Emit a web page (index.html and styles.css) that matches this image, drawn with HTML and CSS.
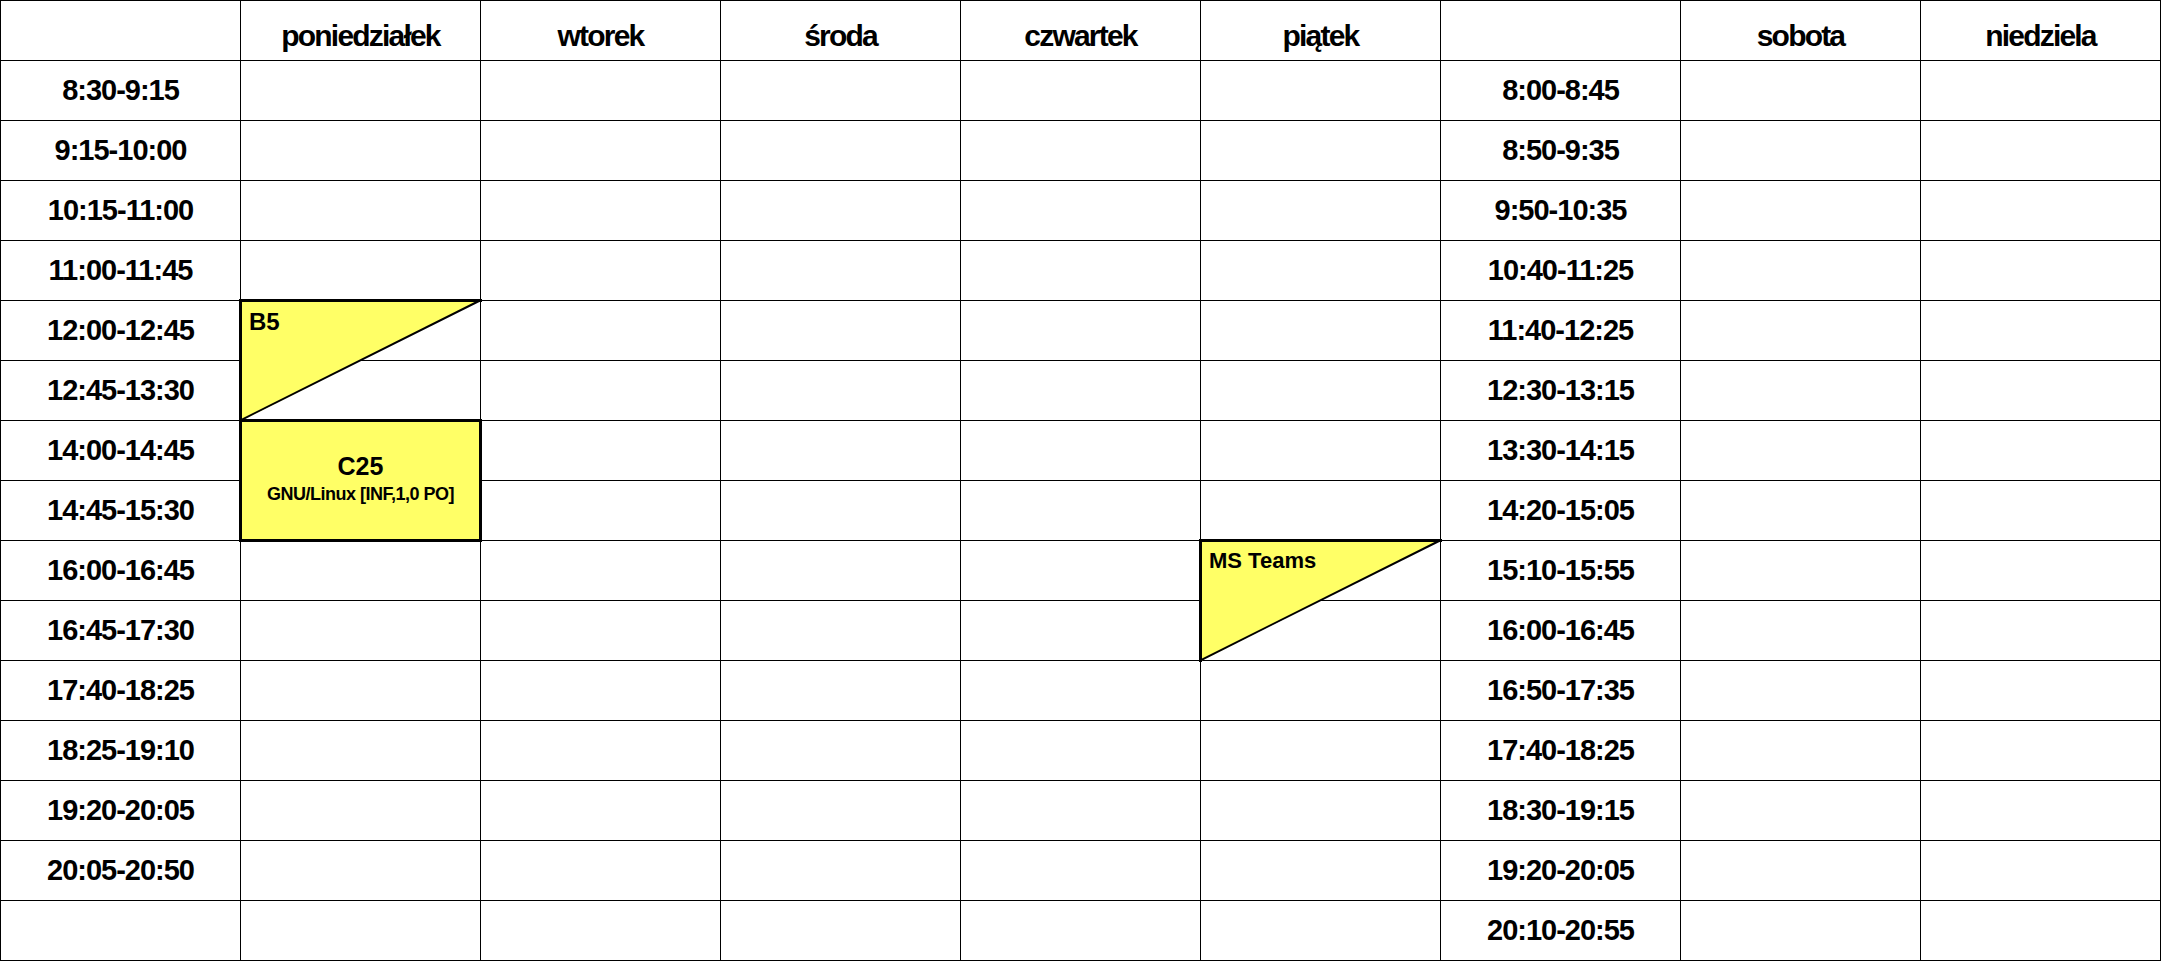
FILE: index.html
```html
<!DOCTYPE html>
<html lang="pl">
<head>
  <meta charset="UTF-8">
  <title>Plan zajęć</title>
  <link rel="stylesheet" href="styles.css">
</head>
<body>
  <div class="plan">
    <div class="cell day"></div>
    <div class="cell day">poniedziałek</div>
    <div class="cell day">wtorek</div>
    <div class="cell day">środa</div>
    <div class="cell day">czwartek</div>
    <div class="cell day">piątek</div>
    <div class="cell day"></div>
    <div class="cell day">sobota</div>
    <div class="cell day">niedziela</div>

    <div class="cell time">8:30-9:15</div><div class="cell"></div><div class="cell"></div><div class="cell"></div><div class="cell"></div><div class="cell"></div><div class="cell time">8:00-8:45</div><div class="cell"></div><div class="cell"></div>
    <div class="cell time">9:15-10:00</div><div class="cell"></div><div class="cell"></div><div class="cell"></div><div class="cell"></div><div class="cell"></div><div class="cell time">8:50-9:35</div><div class="cell"></div><div class="cell"></div>
    <div class="cell time">10:15-11:00</div><div class="cell"></div><div class="cell"></div><div class="cell"></div><div class="cell"></div><div class="cell"></div><div class="cell time">9:50-10:35</div><div class="cell"></div><div class="cell"></div>
    <div class="cell time">11:00-11:45</div><div class="cell"></div><div class="cell"></div><div class="cell"></div><div class="cell"></div><div class="cell"></div><div class="cell time">10:40-11:25</div><div class="cell"></div><div class="cell"></div>
    <div class="cell time">12:00-12:45</div><div class="cell"></div><div class="cell"></div><div class="cell"></div><div class="cell"></div><div class="cell"></div><div class="cell time">11:40-12:25</div><div class="cell"></div><div class="cell"></div>
    <div class="cell time">12:45-13:30</div><div class="cell"></div><div class="cell"></div><div class="cell"></div><div class="cell"></div><div class="cell"></div><div class="cell time">12:30-13:15</div><div class="cell"></div><div class="cell"></div>
    <div class="cell time">14:00-14:45</div><div class="cell"></div><div class="cell"></div><div class="cell"></div><div class="cell"></div><div class="cell"></div><div class="cell time">13:30-14:15</div><div class="cell"></div><div class="cell"></div>
    <div class="cell time">14:45-15:30</div><div class="cell"></div><div class="cell"></div><div class="cell"></div><div class="cell"></div><div class="cell"></div><div class="cell time">14:20-15:05</div><div class="cell"></div><div class="cell"></div>
    <div class="cell time">16:00-16:45</div><div class="cell"></div><div class="cell"></div><div class="cell"></div><div class="cell"></div><div class="cell"></div><div class="cell time">15:10-15:55</div><div class="cell"></div><div class="cell"></div>
    <div class="cell time">16:45-17:30</div><div class="cell"></div><div class="cell"></div><div class="cell"></div><div class="cell"></div><div class="cell"></div><div class="cell time">16:00-16:45</div><div class="cell"></div><div class="cell"></div>
    <div class="cell time">17:40-18:25</div><div class="cell"></div><div class="cell"></div><div class="cell"></div><div class="cell"></div><div class="cell"></div><div class="cell time">16:50-17:35</div><div class="cell"></div><div class="cell"></div>
    <div class="cell time">18:25-19:10</div><div class="cell"></div><div class="cell"></div><div class="cell"></div><div class="cell"></div><div class="cell"></div><div class="cell time">17:40-18:25</div><div class="cell"></div><div class="cell"></div>
    <div class="cell time">19:20-20:05</div><div class="cell"></div><div class="cell"></div><div class="cell"></div><div class="cell"></div><div class="cell"></div><div class="cell time">18:30-19:15</div><div class="cell"></div><div class="cell"></div>
    <div class="cell time">20:05-20:50</div><div class="cell"></div><div class="cell"></div><div class="cell"></div><div class="cell"></div><div class="cell"></div><div class="cell time">19:20-20:05</div><div class="cell"></div><div class="cell"></div>
    <div class="cell time"></div><div class="cell"></div><div class="cell"></div><div class="cell"></div><div class="cell"></div><div class="cell"></div><div class="cell time">20:10-20:55</div><div class="cell"></div><div class="cell"></div>

    <!-- zajęcia co drugi tydzień: trójkąt -->
    <div class="event half ev-b5">
      <svg viewBox="0 0 243 123" preserveAspectRatio="none">
        <polygon points="0,0 243,0 0,123" fill="#ffff66"/>
        <polyline points="1.5,123 1.5,1.5 243,1.5" fill="none" stroke="#000" stroke-width="3"/>
        <line x1="0" y1="122" x2="242" y2="1" stroke="#000" stroke-width="2"/>
      </svg>
      <span class="event-title">B5</span>
    </div>

    <div class="event full ev-c25">
      <span class="event-room">C25</span>
      <span class="event-name">GNU/Linux [INF,1,0 PO]</span>
    </div>

    <div class="event half ev-teams">
      <svg viewBox="0 0 243 123" preserveAspectRatio="none">
        <polygon points="0,0 243,0 0,123" fill="#ffff66"/>
        <polyline points="1.5,123 1.5,1.5 243,1.5" fill="none" stroke="#000" stroke-width="3"/>
        <line x1="0" y1="122" x2="242" y2="1" stroke="#000" stroke-width="2"/>
      </svg>
      <span class="event-title">MS Teams</span>
    </div>
  </div>
</body>
</html>
```

FILE: styles.css
```css
* {
  box-sizing: border-box;
}

body {
  margin: 0;
  background: #fff;
  font-family: "Liberation Sans", Arial, sans-serif;
  font-weight: bold;
  color: #000;
}

.plan {
  position: relative;
  display: grid;
  grid-template-columns: repeat(9, 239px);
  grid-template-rows: repeat(16, 59px);
  gap: 1px;
  padding: 1px;
  width: 2161px;
  background: #000;
}

.cell {
  background: #fff;
  display: flex;
  justify-content: center;
  align-items: center;
  line-height: 1;
}

.day {
  align-items: flex-start;
  padding-top: 20px;
  font-size: 30px;
  letter-spacing: -1.8px;
}

.time {
  font-size: 29px;
  letter-spacing: -1px;
}

/* bloki zajęć */
.event {
  position: absolute;
  inset: -2px;
}

.event svg {
  position: absolute;
  top: 0;
  left: 0;
  width: 100%;
  height: 100%;
}

.half {
  padding: 11px 0 0 10px;
}

.event-title {
  position: relative;
  font-size: 22px;
  line-height: 1;
}

.ev-b5 .event-title {
  font-size: 24px;
}

.full {
  background: #ffff66;
  border: 3px solid #000;
  padding-bottom: 5px;
  display: flex;
  flex-direction: column;
  justify-content: center;
  align-items: center;
  line-height: 1;
}

.event-room {
  font-size: 25px;
  margin-bottom: 6px;
}

.event-name {
  font-size: 18px;
  letter-spacing: -0.5px;
}

.ev-b5 {
  grid-column: 2 / 3;
  grid-row: 6 / 8;
}

.ev-c25 {
  grid-column: 2 / 3;
  grid-row: 8 / 10;
}

.ev-teams {
  grid-column: 6 / 7;
  grid-row: 10 / 12;
}
```
